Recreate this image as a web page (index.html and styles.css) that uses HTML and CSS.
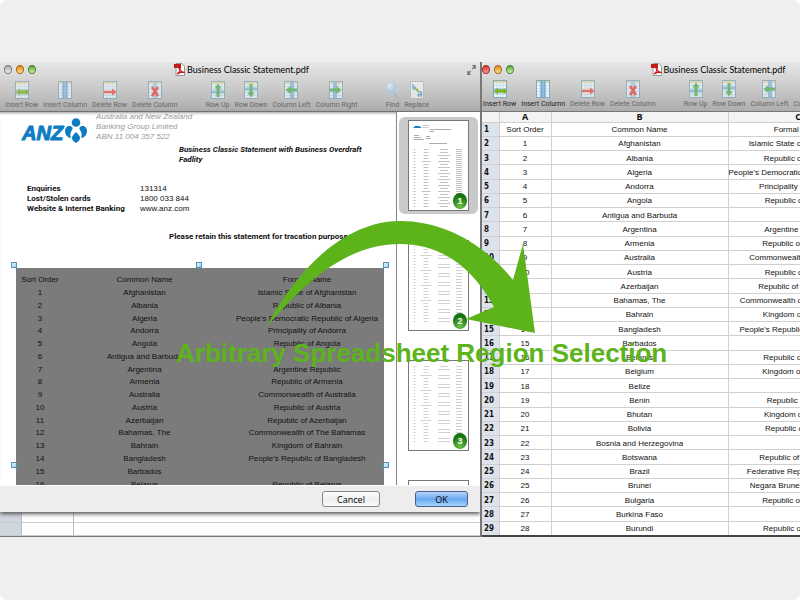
FILE: index.html
```html
<!DOCTYPE html>
<html lang="en">
<head>
<meta charset="utf-8">
<title>Arbitrary Spreadsheet Region Selection</title>
<link rel="stylesheet" href="styles.css">
</head>
<body>
<svg class="sprite" aria-hidden="true">
  <defs>
    <radialGradient id="lens" cx=".35" cy=".3"><stop offset="0" stop-color="#e6f3fb"/><stop offset="1" stop-color="#a5cce2"/></radialGradient>
  </defs>
  <symbol id="sheet" viewBox="0 0 14 18">
    <rect x=".5" y=".5" width="13" height="17" fill="#edf5f9" stroke="#7fa9bf"/>
    <path d="M1 2h12" stroke="#f0d795" stroke-width="2"/>
    <path d="M1 5.5h12M1 8.5h12M1 11.5h12M1 14.5h12M4 1v16M7 1v16M10 1v16" stroke="#b4d3e2" stroke-width=".6"/>
  </symbol>
  <symbol id="insert-row" viewBox="0 0 14 18"><use href="#sheet"/><path d="M1 11h12" stroke="#a9c8e2" stroke-width="5"/><path d="M1 11l4-3.500v2h5c1-1.500 3.500-1 3.500 1.500s-2.500 3-3.500 1.500H5v2z" fill="#7cb61d"/></symbol>
  <symbol id="insert-column" viewBox="0 0 14 18"><use href="#sheet"/><path d="M7 1v16" stroke="#8fbde0" stroke-width="4"/><path d="M5 1v16M9 1v16" stroke="#4f87ae" stroke-width=".7"/></symbol>
  <symbol id="delete-row" viewBox="0 0 14 18"><use href="#sheet"/><path d="M1 11h12" stroke="#f3d2cd" stroke-width="5"/><path d="M1 10h8V7.500l4.500 3.500L9 14.500V12H1z" fill="#e5554b"/></symbol>
  <symbol id="delete-column" viewBox="0 0 14 18"><use href="#sheet"/><path d="M7 1v16" stroke="#a7cbe3" stroke-width="4"/><path d="M4 6l6 9M10 6l-6 9" stroke="#e8493f" stroke-width="2.600"/></symbol>
  <symbol id="row-up" viewBox="0 0 14 18"><use href="#sheet"/><path d="M1 11h12" stroke="#8eb9da" stroke-width="3"/><path d="M7 2.500l3.500 5H8.500V16h-3V7.500h-2z" fill="#53b252"/></symbol>
  <symbol id="row-down" viewBox="0 0 14 18"><use href="#sheet"/><path d="M1 8h12" stroke="#8eb9da" stroke-width="3"/><path d="M7 16.500l3.500-5H8.500V3h-3v8.500h-2z" fill="#53b252"/></symbol>
  <symbol id="column-left" viewBox="0 0 14 18"><use href="#sheet"/><path d="M8 1v16" stroke="#8eb9da" stroke-width="4"/><path d="M1.500 9l5-4v2.500H13v3H6.500V13z" fill="#53b252"/></symbol>
  <symbol id="column-right" viewBox="0 0 14 18"><use href="#sheet"/><path d="M6 1v16" stroke="#8eb9da" stroke-width="4"/><path d="M12.500 9l-5-4v2.500H1v3h6.500V13z" fill="#53b252"/></symbol>
  <symbol id="find" viewBox="0 0 14 18"><path d="M8 11l4 5" stroke="#9fb3bf" stroke-width="2" stroke-linecap="round"/><ellipse cx="6.500" cy="7" rx="5.500" ry="6" fill="url(#lens)" stroke="#b5cfdd"/></symbol>
  <symbol id="replace" viewBox="0 0 14 18"><rect x=".5" y=".5" width="13" height="17" fill="#eef1f2" stroke="#b3b8ba"/><path d="M3 3v5M3 6.500c3-2 4 2 0 1.500M8 11.500c3-2 4-.5 3.500 4M11 13c-5 0-3 3.500 0 1.500" fill="none" stroke="#5e9cc4" stroke-width="1.300"/><path d="M5 8l3 3V8z" fill="#86b93f" stroke="#86b93f"/></symbol>
  <symbol id="pdf" viewBox="0 0 11 13"><path d="M2 .5h6l2.500 3v9H2z" fill="#fff" stroke="#999"/><path d="M0 1h7v4H0z" fill="#c31a1a"/><path d="M3 11c3-2 4-6 2.500-7-1.500 2 2 5.500 5 5.500-2-1-5 0-7.500 1.500z" fill="none" stroke="#c31a1a" stroke-width="1.200"/></symbol>
  <symbol id="minipage" viewBox="0 0 59 89">
    <g stroke="#d2d2d2" fill="none">
      <path d="M5.500 5v77" stroke-width="2" stroke-dasharray="1 2"/>
      <path d="M17 5v77" stroke-width="5" stroke-dasharray="1 2"/>
      <path d="M17 14v60" stroke-width="11" stroke-dasharray="1 14"/>
      <path d="M35 5v77" stroke-width="8" stroke-dasharray="1 2 1 5"/>
      <path d="M35 8v74" stroke-width="12" stroke-dasharray="1 5 1 2"/>
      <path d="M50 5v77" stroke-width="6" stroke-dasharray="1 2"/>
    </g>
  </symbol>
  <symbol id="coverpage" viewBox="0 0 59 89">
    <path d="M4 7l2-2h4l2 1v1z" fill="#1685c6"/>
    <path d="M13 4.500h8M13 6.500h7" stroke="#ccc"/>
    <g stroke="#999" fill="none">
      <path d="M21 8.500h21M21 10.500h4M5 14.500h5M5 16.500h7M5 18.500h10M17 15.500h4M17 17.500h5M20 22.500h18" stroke-width=".8"/>
    </g>
    <g stroke="#c4c4c4" fill="none">
      <path d="M5.500 28v58" stroke-width="2" stroke-dasharray="1 2"/>
      <path d="M17 28v58" stroke-width="5" stroke-dasharray="1 2"/>
      <path d="M17 40v46" stroke-width="9" stroke-dasharray="1 29"/>
      <path d="M35 28v58" stroke-width="8" stroke-dasharray="1 2"/>
      <path d="M35 34v50" stroke-width="12" stroke-dasharray="1 5"/>
      <path d="M50 28v58" stroke-width="6" stroke-dasharray="1 1"/>
    </g>
  </symbol>
</svg>

<main class="scene">
  <section class="window window-back" aria-label="Import region">
    <header class="chrome">
      <div class="titlebar">
        <span class="lights"><i class="light off"></i><i class="light amber"></i><i class="light green"></i></span>
        <h2 class="title"><svg class="pdf"><use href="#pdf"/></svg>Business Classic Statement.pdf</h2>
        <svg class="expand" viewBox="0 0 10 12"><path d="M6 1h3v4M9 1L6 5M1 7v4h3M1 11l3-4" fill="none" stroke="#666" stroke-width="1.300"/></svg>
      </div>
      <nav class="toolbar">
        <div class="group">
          <button class="tool"><svg><use href="#insert-row"/></svg>Insert Row</button>
          <button class="tool"><svg><use href="#insert-column"/></svg>Insert Column</button>
          <button class="tool"><svg><use href="#delete-row"/></svg>Delete Row</button>
          <button class="tool"><svg><use href="#delete-column"/></svg>Delete Column</button>
        </div>
        <div class="group">
          <button class="tool"><svg><use href="#row-up"/></svg>Row Up</button>
          <button class="tool"><svg><use href="#row-down"/></svg>Row Down</button>
          <button class="tool"><svg><use href="#column-left"/></svg>Column Left</button>
          <button class="tool"><svg><use href="#column-right"/></svg>Column Right</button>
        </div>
        <div class="group">
          <button class="tool"><svg><use href="#find"/></svg>Find</button>
          <button class="tool"><svg><use href="#replace"/></svg>Replace</button>
        </div>
      </nav>
    </header>

    <div class="sheet">
      <div class="viewer">
        <article class="paper">
          <div class="letterhead">
            <div class="brand"><span>ANZ</span>
              <svg viewBox="0 0 22 25"><g fill="#0d7cc1"><circle cx="11" cy="4.500" r="4.300"/><path d="M11 14c3 3 4 4 4 6s-2 4-4 5c-2-1-4-3-4-5s1-3 4-6z"/><path d="M0 13c0-3 2-5 4-5 3 0 4.500 2 3 4-2 3-2 5-1 8C3 20 0 17 0 13zM22 13c0-3-2-5-4-5-3 0-4.500 2-3 4 2 3 2 5 1 8 3 0 6-3 6-7z"/></g></svg>
            </div>
            <p class="address">Australia and New Zealand<br>Banking Group Limited<br>ABN 11 004 357 522</p>
          </div>
          <h1 class="doc-title">Business Classic Statement with Business Overdraft<br>Fadlity</h1>
          <dl class="contacts">
            <dt>Enquiries</dt><dd>131314</dd>
            <dt>Lost/Stolen cards</dt><dd>1800 033 844</dd>
            <dt>Website &amp; Internet Banking</dt><dd>www.anz.com</dd>
          </dl>
          <p class="retain">Please retain this statement for tracation purpose.</p>
          <div class="selection">
            <i class="handle top left"></i><i class="handle top mid"></i><i class="handle top right"></i>
            <i class="handle low left"></i><i class="handle low right"></i>
            <div class="region">
              <table class="countries">
                <colgroup><col class="c-order"><col class="c-name"><col></colgroup>
                <tr><th>Sort Order</th><th>Common Name</th><th>Formal Name</th></tr>
                <tr><td>1</td><td>Afghanistan</td><td>Islamic State of Afghanistan</td></tr>
                <tr><td>2</td><td>Albania</td><td>Republic of Albania</td></tr>
                <tr><td>3</td><td>Algeria</td><td>People's Democratic Republic of Algeria</td></tr>
                <tr><td>4</td><td>Andorra</td><td>Principality of Andorra</td></tr>
                <tr><td>5</td><td>Angola</td><td>Republic of Angola</td></tr>
                <tr><td>6</td><td>Antigua and Barbuda</td><td></td></tr>
                <tr><td>7</td><td>Argentina</td><td>Argentine Republic</td></tr>
                <tr><td>8</td><td>Armenia</td><td>Republic of Armenia</td></tr>
                <tr><td>9</td><td>Australia</td><td>Commonwealth of Australia</td></tr>
                <tr><td>10</td><td>Austria</td><td>Republic of Austria</td></tr>
                <tr><td>11</td><td>Azerbaijan</td><td>Republic of Azerbaijan</td></tr>
                <tr><td>12</td><td>Bahamas, The</td><td>Commonwealth of The Bahamas</td></tr>
                <tr><td>13</td><td>Bahrain</td><td>Kingdom of Bahrain</td></tr>
                <tr><td>14</td><td>Bangladesh</td><td>People's Republic of Bangladesh</td></tr>
                <tr><td>15</td><td>Barbados</td><td></td></tr>
                <tr><td>16</td><td>Belarus</td><td>Republic of Belarus</td></tr>
              </table>
            </div>
          </div>
        </article>
        <ol class="thumbs">
          <li class="thumb current"><div class="page"><svg><use href="#coverpage"/></svg><b class="badge">1</b></div></li>
          <li class="thumb"><div class="page"><svg><use href="#minipage"/></svg><b class="badge">2</b></div></li>
          <li class="thumb"><div class="page"><svg><use href="#minipage"/></svg><b class="badge">3</b></div></li>
          <li class="thumb"><div class="page"></div></li>
        </ol>
      </div>
      <footer class="actions">
        <button class="push">Cancel</button>
        <button class="push default">OK</button>
      </footer>
    </div>
    <div class="underlay"><i></i><i></i><i></i><i></i><i></i><i></i></div>
  </section>

  <section class="window window-front" aria-label="Spreadsheet">
    <header class="chrome">
      <div class="titlebar">
        <span class="lights"><i class="light red"></i><i class="light amber"></i><i class="light green"></i></span>
        <h2 class="title"><svg class="pdf"><use href="#pdf"/></svg>Business Classic Statement.pdf</h2>
      </div>
      <nav class="toolbar">
        <div class="group">
          <button class="tool on"><svg><use href="#insert-row"/></svg>Insert Row</button>
          <button class="tool on"><svg><use href="#insert-column"/></svg>Insert Column</button>
          <button class="tool"><svg><use href="#delete-row"/></svg>Delete Row</button>
          <button class="tool"><svg><use href="#delete-column"/></svg>Delete Column</button>
        </div>
        <div class="group">
          <button class="tool"><svg><use href="#row-up"/></svg>Row Up</button>
          <button class="tool"><svg><use href="#row-down"/></svg>Row Down</button>
          <button class="tool"><svg><use href="#column-left"/></svg>Column Left</button>
          <button class="tool"><svg><use href="#column-right"/></svg>Column Right</button>
        </div>
      </nav>
    </header>
    <div class="grid-view">
      <table class="grid">
        <colgroup><col class="g-num"><col class="g-a"><col class="g-b"><col class="g-c"></colgroup>
        <thead><tr><th></th><th>A</th><th>B</th><th>C</th></tr></thead>
        <tbody>
          <tr><th>1</th><td>Sort Order</td><td>Common Name</td><td>Formal Name</td></tr>
          <tr><th>2</th><td>1</td><td>Afghanistan</td><td>Islamic State of Afghanistan</td></tr>
          <tr><th>3</th><td>2</td><td>Albania</td><td>Republic of Albania</td></tr>
          <tr><th>4</th><td>3</td><td>Algeria</td><td>People's Democratic Republic of Algeria</td></tr>
          <tr><th>5</th><td>4</td><td>Andorra</td><td>Principality of Andorra</td></tr>
          <tr><th>6</th><td>5</td><td>Angola</td><td>Republic of Angola</td></tr>
          <tr><th>7</th><td>6</td><td>Antigua and Barbuda</td><td></td></tr>
          <tr><th>8</th><td>7</td><td>Argentina</td><td>Argentine Republic</td></tr>
          <tr><th>9</th><td>8</td><td>Armenia</td><td>Republic of Armenia</td></tr>
          <tr><th>10</th><td>9</td><td>Australia</td><td>Commonwealth of Australia</td></tr>
          <tr><th>11</th><td>10</td><td>Austria</td><td>Republic of Austria</td></tr>
          <tr><th>12</th><td>11</td><td>Azerbaijan</td><td>Republic of Azerbaijan</td></tr>
          <tr><th>13</th><td>12</td><td>Bahamas, The</td><td>Commonwealth of The Bahamas</td></tr>
          <tr><th>14</th><td>13</td><td>Bahrain</td><td>Kingdom of Bahrain</td></tr>
          <tr><th>15</th><td>14</td><td>Bangladesh</td><td>People's Republic of Bangladesh</td></tr>
          <tr><th>16</th><td>15</td><td>Barbados</td><td></td></tr>
          <tr><th>17</th><td>16</td><td>Belarus</td><td>Republic of Belarus</td></tr>
          <tr><th>18</th><td>17</td><td>Belgium</td><td>Kingdom of Belgium</td></tr>
          <tr><th>19</th><td>18</td><td>Belize</td><td></td></tr>
          <tr><th>20</th><td>19</td><td>Benin</td><td>Republic of Benin</td></tr>
          <tr><th>21</th><td>20</td><td>Bhutan</td><td>Kingdom of Bhutan</td></tr>
          <tr><th>22</th><td>21</td><td>Bolivia</td><td>Republic of Bolivia</td></tr>
          <tr><th>23</th><td>22</td><td>Bosnia and Herzegovina</td><td></td></tr>
          <tr><th>24</th><td>23</td><td>Botswana</td><td>Republic of Botswana</td></tr>
          <tr><th>25</th><td>24</td><td>Brazil</td><td>Federative Republic of Brazil</td></tr>
          <tr><th>26</th><td>25</td><td>Brunei</td><td>Negara Brunei Darussalam</td></tr>
          <tr><th>27</th><td>26</td><td>Bulgaria</td><td>Republic of Bulgaria</td></tr>
          <tr><th>28</th><td>27</td><td>Burkina Faso</td><td></td></tr>
          <tr><th>29</th><td>28</td><td>Burundi</td><td>Republic of Burundi</td></tr>
        </tbody>
      </table>
    </div>
  </section>

  <svg class="arrow" viewBox="266 221 269 112" aria-hidden="true"><path d="M266 328C300 262 350 221 400 221C445 221 485 245 513 280L523 244L535 333L466 319L494 307C472 266 440 244 400 244C352 244 310 275 266 328Z" fill="#5cb31a"/></svg>
  <p class="caption">Arbitrary Spreadsheet Region Selection</p>
</main>
</body>
</html>
```
FILE: styles.css
```css
* { box-sizing: border-box; }
body {
  margin: 0;
  background: #fff;
  color: #111;
  font: 8px/10px "Liberation Sans", Arial, sans-serif;
}
h1, h2, p, dl, dd, ol { margin: 0; padding: 0; font-size: inherit; }
button { border: 0; padding: 0; background: none; font: inherit; color: inherit; }
i { font-style: normal; }
.sprite { position: absolute; width: 0; height: 0; }

.scene {
  position: relative;
  display: grid;
  grid-template-columns: minmax(0, 482fr) minmax(0, 318fr);
  min-height: 100vh;
  padding: 62px 0;
  align-content: start;
  background: #efefef;
  border-radius: 7px;
  overflow: hidden;
}
.window { display: flex; flex-direction: column; height: 475px; overflow: hidden; background: #fff; }
.window-back { border-right: 2px solid #777; border-bottom: 1px solid #777; }
.window-front { border-bottom: 2px solid #444; }

/* title bar and toolbar */
.chrome {
  flex: none;
  height: 50px;
  background: linear-gradient(#e6e6e6, #cfcfcf 45%, #adadad);
  border-bottom: 1px solid #777;
}
.titlebar { display: flex; align-items: center; height: 15px; padding: 0 4px; }
.window-front .titlebar { width: 460px; height: 14px; padding: 0; }
.lights { display: flex; gap: 4px; }
.light { width: 8px; height: 9px; border-radius: 50%; border: 1px solid #777; }
.off { background: linear-gradient(#aaa, #eee); }
.red { background: linear-gradient(#d33, #fa9a90); border-color: #9c2b25; }
.amber { background: linear-gradient(#e08a1c, #ffe08a); border-color: #a0661c; }
.green { background: linear-gradient(#5ba63a, #cdf5a4); border-color: #4b7f35; }
.title {
  flex: 1;
  display: flex;
  justify-content: center;
  align-items: center;
  gap: 2px;
  padding-right: 20px;
  font: 9px/13px Lato, "Open Sans", sans-serif;
  color: #000;
  white-space: nowrap;
}
.pdf { width: 11px; height: 13px; }
.expand { width: 9px; height: 12px; }
.toolbar { display: flex; gap: 28px; padding: 4px 0 0 5px; font: 7px/10px Roboto, sans-serif; }
.window-front .toolbar { padding-left: 1px; }
.group { display: flex; gap: 5px; }
.tool {
  display: flex;
  flex-direction: column;
  align-items: center;
  gap: 1px;
  color: #666;
  white-space: nowrap;
}
.tool svg { width: 14px; height: 18px; opacity: .75; }
.tool.on { color: #222; }
.tool.on svg { opacity: 1; }

/* document viewer */
.sheet { position: relative; display: flex; flex-direction: column; height: 400px; box-shadow: 0 2px 4px #555; }
.viewer { display: flex; flex: 1; min-height: 0; overflow: hidden; }
.paper { flex: 1; min-width: 0; display: flex; flex-direction: column; box-shadow: inset 0 3px 3px -2px #999; }
.letterhead { display: flex; gap: 9px; padding-left: 22px; height: 33px; }
.brand { display: flex; align-items: flex-end; gap: 2px; height: 31px; }
.brand span { font: italic bold 20px/20px "Liberation Sans", sans-serif; color: #0d7cc1; -webkit-text-stroke: 1px #0d7cc1; }
.brand svg { width: 22px; height: 25px; }
.address { font-style: italic; color: #999; }
.doc-title { margin-left: 179px; font-family: Roboto, sans-serif; font-style: italic; white-space: nowrap; }
.contacts {
  display: grid;
  grid-template-columns: 113px 1fr;
  margin: 19px 0 0 27px;
}
.contacts dt, .retain { font-family: Roboto, sans-serif; font-weight: bold; white-space: nowrap; }
.retain { margin: 18px 0 0 169px; }
.selection { position: relative; flex: 1; min-height: 0; margin: 26px 12px 0 16px; }
.region { height: 100%; background: #7b7b7b; overflow: hidden; padding-top: 6px; }
.handle { position: absolute; width: 6px; height: 6px; border: 1px solid #4c95bd; background: linear-gradient(135deg, #eaf7fd, #9bcfe9); }
.top { top: -6px; }
.low { top: 194px; }
.left { left: -5px; }
.mid { left: 49%; }
.right { right: -5px; }
.countries { width: 100%; height: 217px; border-collapse: collapse; table-layout: fixed; text-align: center; white-space: nowrap; }
.countries th { font-weight: normal; }
.countries th, .countries td { padding: 0; }
.countries th:last-child, .countries td:last-child { padding-left: 5px; }
.c-order { width: 48px; }
.c-name { width: 161px; }

/* page thumbnails */
.thumbs {
  flex: none;
  width: 84px;
  padding: 5px 2px 0;
  display: flex;
  flex-direction: column;
  gap: 23px;
  list-style: none;
  border-left: 1px solid #888;
  overflow: hidden;
}
.thumb { flex: none; height: 97px; padding: 3px 9px; border-radius: 6px; }
.current { background: #c9c9c9; }
.page { position: relative; height: 91px; border: 1px solid #777; background: #fff; }
.page svg { display: block; width: 100%; height: 89px; }
.badge {
  position: absolute;
  right: 1px;
  bottom: 1px;
  width: 14px;
  height: 16px;
  border-radius: 50%;
  background: radial-gradient(circle at 50% 85%, #6cc04a, #1d7c12 60%, #0f6409);
  color: #fff;
  font: bold 9px/16px "Liberation Sans", sans-serif;
  text-align: center;
}

.actions {
  display: flex;
  justify-content: flex-end;
  align-items: center;
  gap: 35px;
  height: 27px;
  padding-right: 12px;
  background: #ededed;
  border-top: 1px solid #fff;
}
.push {
  width: 58px;
  height: 16px;
  border: 1px solid #888;
  border-radius: 3px;
  background: linear-gradient(#fff, #eee 50%, #fafafa);
  font: 9px/13px "Open Sans", sans-serif;
  color: #000;
}
.push.default { width: 53px; border-color: #4a5d9b; background: linear-gradient(#b9d6f8, #6aa7ee 50%, #a2d7fb); }

.underlay { flex: 1; display: grid; grid-template-columns: 22px 52px 1fr; grid-template-rows: 11px 1fr; }
.underlay i { border-right: 1px solid #bbb; border-bottom: 1px solid #ccc; }
.underlay i:nth-child(3n) { border-right: 0; }
.underlay i:nth-child(3n+1) { background: #d0d7e1; }

/* spreadsheet */
.grid-view { flex: 1; min-height: 0; overflow: hidden; }
.grid { width: 386px; height: 424px; table-layout: fixed; border-collapse: collapse; text-align: center; white-space: nowrap; }
.g-num { width: 17px; }
.g-a { width: 52px; }
.g-b { width: 177px; }
.g-c { width: 140px; }
.grid th, .grid td { padding: 2px 0 0; border-right: 1px solid #d0d0d0; border-bottom: 1px solid #d0d0d0; }
.grid thead th { height: 10px; padding: 0; background: #f3f3f3; font: bold 9px/9px "Open Sans", sans-serif; }
.grid tbody th { padding-left: 2px; background: #dde3eb; text-align: left; font: bold 8px/10px "DejaVu Sans Condensed", "DejaVu Sans", sans-serif; }

/* annotation over both windows */
.arrow { position: absolute; top: 221px; left: 33.250%; width: 33.625%; }
.caption {
  position: absolute;
  top: 338px;
  left: 22%;
  font: bold 26px/30px "Liberation Sans", sans-serif;
  color: #5cb31a;
  white-space: nowrap;
}
```
